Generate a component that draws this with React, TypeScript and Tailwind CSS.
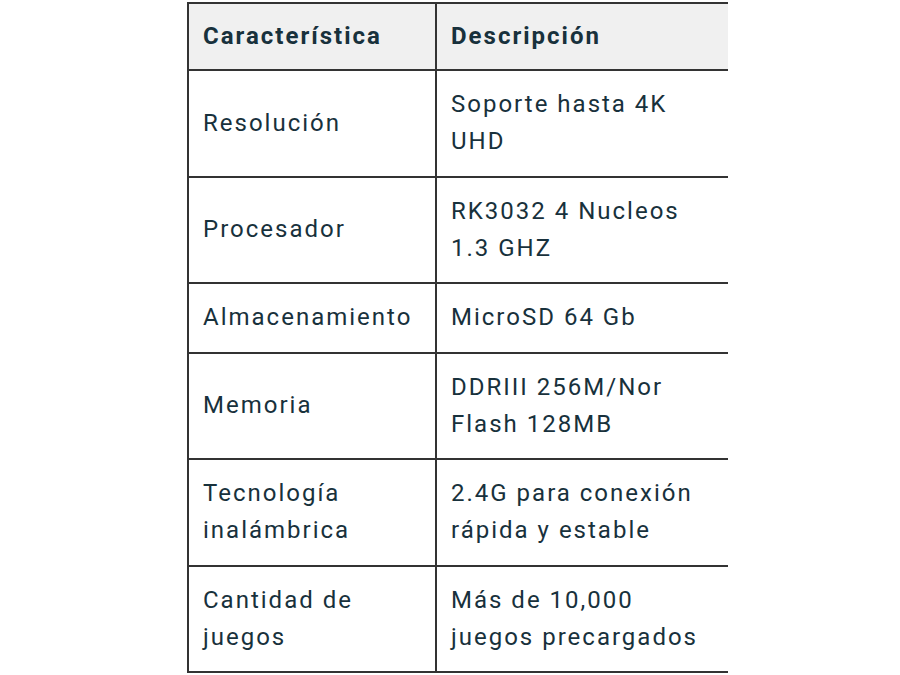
const rows: [string, string][] = [
  ["Resolución", "Soporte hasta 4K UHD"],
  ["Procesador", "RK3032 4 Nucleos 1.3 GHZ"],
  ["Almacenamiento", "MicroSD 64 Gb"],
  ["Memoria", "DDRIII 256M/Nor Flash 128MB"],
  ["Tecnología inalámbrica", "2.4G para conexión rápida y estable"],
  ["Cantidad de juegos", "Más de 10,000 juegos precargados"],
];

export default function App() {
  return (
    <div className="w-[900px] h-[675px] bg-white overflow-hidden font-['Roboto',sans-serif] text-[#18313c]">
      <div className="ml-[187px] mt-[2px] w-[541px] overflow-hidden">
        <table className="w-[600px] border-collapse text-[24px] leading-[37px] tracking-[2px]">
          <thead>
            <tr className="bg-[#f0f0f0]">
              <th className="w-[248px] border-2 border-[#333] px-[14px] py-[14px] text-left font-bold">
                Característica
              </th>
              <th className="border-2 border-[#333] px-[14px] py-[14px] text-left font-bold">
                Descripción
              </th>
            </tr>
          </thead>
          <tbody>
            {rows.map(([k, v]) => (
              <tr key={k}>
                <td className="border-2 border-[#333] px-[14px] py-[15.25px] align-middle">{k}</td>
                <td className="border-2 border-[#333] pl-[14px] pr-[80px] py-[15.25px] align-middle">{v}</td>
              </tr>
            ))}
          </tbody>
        </table>
      </div>
    </div>
  );
}
